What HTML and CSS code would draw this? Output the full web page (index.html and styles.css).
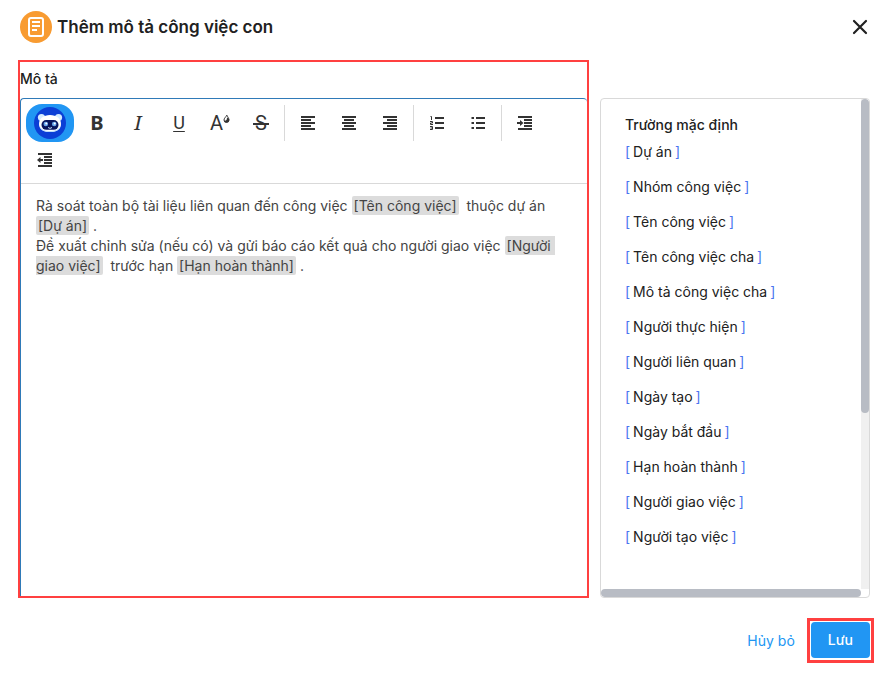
FILE: index.html
```html
<!DOCTYPE html>
<html lang="vi">
<head>
    <meta charset="UTF-8">
    <meta name="viewport" content="width=device-width, initial-scale=1.0">
    <title>Thêm mô tả công việc con</title>
    <link rel="stylesheet" href="styles.css">
</head>
<body>

    <header class="header">
        <svg class="header-icon" viewBox="0 0 32 32" aria-hidden="true">
            <circle cx="16" cy="16" r="16" fill="#f89b31"/>
            <rect x="9" y="7" width="14" height="18" rx="2" fill="none" stroke="#fff" stroke-width="2"/>
            <path d="M12 11h8M12 15h8M12 19h5" fill="none" stroke="#fff" stroke-width="1.8"/>
        </svg>
        <h1 class="title">Thêm mô tả công việc con</h1>
        <button class="close" type="button" aria-label="Đóng">
            <svg width="16" height="16" viewBox="0 0 16 16"><path d="M2 2l12 12M14 2L2 14" stroke="#212121" stroke-width="2.2" stroke-linecap="round"/></svg>
        </button>
    </header>

    <main class="content">
        <section class="description">
            <h2 class="label" id="descLabel">Mô tả</h2>
            <div class="editor">
                <div class="toolbar" role="toolbar">
                    <button class="assistant" type="button" aria-label="Trợ lý AI">
                        <svg width="32" height="32" viewBox="0 0 32 32">
                            <circle cx="16" cy="16" r="16" fill="#0b3fd6"/>
                            <circle cx="7.5" cy="10.500" r="3.6" fill="#d5ecff"/>
                            <circle cx="24.5" cy="10.500" r="3.6" fill="#d5ecff"/>
                            <path d="M16 8c-6.500 0-11 3.500-11 9S9.500 25 16 25s11-2.500 11-8S22.500 8 16 8z" fill="#fff"/>
                            <path d="M6 19.500c1.500 3.500 5.500 4.500 10 4.500s8.500-1 10-4.500c-.6 4-4.500 5.500-10 5.500s-9.400-1.500-10-5.500z" fill="#b9dcfa"/>
                            <rect x="7.500" y="13" width="17" height="9.800" rx="4.800" fill="#08145c"/>
                            <circle cx="11.800" cy="17" r="2.300" fill="#6ba8ee"/>
                            <circle cx="20.200" cy="17" r="2.300" fill="#6ba8ee"/>
                            <circle cx="12.300" cy="16.500" r="1" fill="#fff"/>
                            <circle cx="20.700" cy="16.500" r="1" fill="#fff"/>
                            <path d="M14 20.300c1 1.300 3 1.300 4 0" fill="none" stroke="#d5ecff" stroke-width="1"/>
                        </svg>
                    </button>
                    <button class="tool bold" type="button" aria-label="Đậm">B</button>
                    <button class="tool italic" type="button" aria-label="Nghiêng">I</button>
                    <button class="tool underline" type="button" aria-label="Gạch chân">U</button>
                    <button class="tool color" type="button" aria-label="Màu chữ">A<svg width="7" height="10" viewBox="0 0 7 10"><path d="M3.800 1.200C3 3 1 4.200 1 6a2.500 2.500 0 0 0 5 0C6 4.500 4.800 3 3.800 1.200z"/><path class="fill" d="M6 5a2.600 2.600 0 0 1-5 1.600C3 7 4 6 4 3.500z"/></svg></button>
                    <button class="tool strike" type="button" aria-label="Gạch ngang">&#8202;S&#8202;</button>
                    <span class="separator"></span>
                    <button class="tool" type="button" aria-label="Căn trái">
                        <svg width="16" height="16" viewBox="0 0 16 16"><path d="M1 2h14M1 5h10M1 8h14M1 11h10M1 14h14"/></svg>
                    </button>
                    <button class="tool" type="button" aria-label="Căn giữa">
                        <svg width="16" height="16" viewBox="0 0 16 16"><path d="M1 2h14M3 5h10M1 8h14M3 11h10M1 14h14"/></svg>
                    </button>
                    <button class="tool" type="button" aria-label="Căn phải">
                        <svg width="16" height="16" viewBox="0 0 16 16"><path d="M1 2h14M5 5h10M1 8h14M5 11h10M1 14h14"/></svg>
                    </button>
                    <span class="separator"></span>
                    <button class="tool" type="button" aria-label="Danh sách số">
                        <svg width="16" height="16" viewBox="0 0 16 16">
                            <path d="M6 3h9M6 8h9M6 13h9"/>
                            <path class="thin" d="M1.500 1.500h1V5M1 6.500h2.500V8H1.500v1.500h2.500M1 11.500h2.500v3H1M1.500 13h2"/>
                        </svg>
                    </button>
                    <button class="tool" type="button" aria-label="Danh sách">
                        <svg width="16" height="16" viewBox="0 0 16 16"><path d="M6 3h9M6 8h9M6 13h9M1.500 3h2.500M1.500 8h2.500M1.500 13h2.500"/></svg>
                    </button>
                    <span class="separator"></span>
                    <button class="tool" type="button" aria-label="Tăng thụt lề">
                        <svg width="16" height="16" viewBox="0 0 16 16"><path d="M1 2h14M7 5h8M7 8h8M7 11h8M1 14h14M0 8h4"/><path class="fill" d="M3 5l3.500 3L3 11z"/></svg>
                    </button>
                    <button class="tool" type="button" aria-label="Giảm thụt lề">
                        <svg width="16" height="16" viewBox="0 0 16 16"><path d="M1 2h14M7 5h8M7 8h8M7 11h8M1 14h14M2 8h4"/><path class="fill" d="M3.500 5L0 8l3.500 3z"/></svg>
                    </button>
                </div>
                <div class="text" contenteditable="true" role="textbox" aria-multiline="true" aria-labelledby="descLabel" spellcheck="false">
                    <p>Rà soát toàn bộ tài liệu liên quan đến công việc <span class="mention">[Tên công việc]</span>&nbsp; thuộc dự án <span class="mention">[Dự án]</span> .</p>
                    <p>Đề xuất chỉnh sửa (nếu có) và gửi báo cáo kết quả cho người giao việc <span class="mention">[Người giao việc]</span>&nbsp; trước hạn <span class="mention">[Hạn hoàn thành]</span> .</p>
                </div>
            </div>
        </section>

        <aside class="fields">
            <div class="fields-body">
                <h2 class="fields-title">Trường mặc định</h2>
                <ul class="field-list">
                    <li><button class="field" type="button">Dự án</button></li>
                    <li><button class="field" type="button">Nhóm công việc</button></li>
                    <li><button class="field" type="button">Tên công việc</button></li>
                    <li><button class="field" type="button">Tên công việc cha</button></li>
                    <li><button class="field" type="button">Mô tả công việc cha</button></li>
                    <li><button class="field" type="button">Người thực hiện</button></li>
                    <li><button class="field" type="button">Người liên quan</button></li>
                    <li><button class="field" type="button">Ngày tạo</button></li>
                    <li><button class="field" type="button">Ngày bắt đầu</button></li>
                    <li><button class="field" type="button">Hạn hoàn thành</button></li>
                    <li><button class="field" type="button">Người giao việc</button></li>
                    <li><button class="field" type="button">Người tạo việc</button></li>
                </ul>
            </div>
            <div class="scroll-y"><div class="thumb"></div></div>
            <div class="scroll-x"><div class="thumb"></div></div>
        </aside>
    </main>

    <footer class="footer">
        <button class="cancel" type="button">Hủy bỏ</button>
        <div class="save-frame">
            <button class="save" type="button">Lưu</button>
        </div>
    </footer>

</body>
</html>
```
FILE: styles.css
```css
* {
    margin: 0;
    padding: 0;
    box-sizing: border-box;
}
body {
    min-height: 100vh;
    display: flex;
    flex-direction: column;
    font-family: Inter, "Noto Sans", sans-serif;
    font-size: 14px;
    line-height: 20px;
    color: #212121;
    background: #fff;
}
button {
    border: none;
    background: none;
    font: inherit;
    color: inherit;
    cursor: pointer;
}
svg {
    display: block;
}

.header {
    display: flex;
    align-items: center;
    gap: 5px;
    padding: 11px 22px 17px 20px;
}
.header-icon {
    width: 32px;
    height: 32px;
}
.title {
    flex: 1;
    font-size: 17px;
    line-height: 24px;
    font-weight: 600;
}
.close {
    padding: 2px;
}

.content {
    flex: 1;
    display: flex;
    gap: 11px;
    padding: 0 22px 0 18px;
}
.description {
    flex: 1;
    display: flex;
    flex-direction: column;
    border: 2px solid #ff4040;
}
.label {
    padding: 7px 0 9px;
    font-size: 14px;
    font-weight: 500;
}
.editor {
    flex: 1;
    display: flex;
    flex-direction: column;
    border: 1px solid #2f7ab8;
    border-right: none;
    border-bottom: none;
    border-radius: 4px 4px 0 0;
}

.toolbar {
    display: flex;
    flex-wrap: wrap;
    align-items: center;
    column-gap: 3px;
    padding: 5px;
    border-bottom: 1px solid #d9d9d9;
}
.assistant {
    width: 48px;
    height: 38px;
    margin-right: 1px;
    display: flex;
    align-items: center;
    justify-content: center;
    border-radius: 16px;
    background: #2196f3;
}
.tool {
    width: 38px;
    height: 36px;
    display: flex;
    align-items: center;
    justify-content: center;
    font-size: 20px;
    color: #333;
}
.tool path {
    fill: none;
    stroke: #333;
    stroke-width: 2;
}
.tool .thin,
.color path {
    stroke-width: 1;
}
.tool .fill {
    fill: #333;
    stroke: none;
}
.bold {
    font-family: "Noto Sans", sans-serif;
    font-weight: 700;
}
.italic {
    font-family: "Noto Serif", "Liberation Serif", serif;
    font-style: italic;
}
.underline,
.strike,
.color {
    font-family: Roboto, sans-serif;
}
.underline {
    font-size: 18px;
    text-decoration: underline;
    text-underline-offset: 2px;
}
.strike {
    text-decoration: line-through;
}
.color svg {
    align-self: flex-start;
    margin-top: 9px;
}
.separator {
    width: 1px;
    height: 36px;
    margin: 0 1px;
    background: #d9d9d9;
}

.text {
    flex: 1;
    padding: 12px 15px;
    color: #444;
    outline: none;
}
.mention {
    padding: 1px 2px;
    border-radius: 2px;
    background: #dcdcdc;
    white-space: pre-wrap;
}

.fields {
    width: 270px;
    display: grid;
    grid-template-columns: 1fr 8px;
    grid-template-rows: 1fr 8px;
    border: 1px solid #d9d9d9;
    border-radius: 4px;
    margin-top: 38px;
    overflow: hidden;
}
.fields-body {
    padding: 16px 24px 24px;
}
.fields-title {
    font-size: 14px;
    font-weight: 500;
    margin-bottom: 7px;
}
.field-list {
    display: flex;
    flex-direction: column;
    gap: 15px;
    list-style: none;
}
.field {
    display: flex;
    gap: 3px;
}
.field::before,
.field::after {
    color: #4a74f0;
}
.field::before {
    content: "[";
}
.field::after {
    content: "]";
}
.scroll-y {
    background: #f0f0f0;
}
.scroll-y .thumb {
    height: 64%;
}
.thumb {
    height: 100%;
    border-radius: 4px;
    background: #b8bcc4;
}

.footer {
    display: flex;
    align-items: center;
    justify-content: flex-end;
    gap: 12px;
    padding: 20px 18px 17px;
}
.cancel {
    color: #2196f3;
}
.save-frame {
    padding: 1px 1px 2px;
    border: 3px solid #ff4040;
}
.save {
    display: block;
    padding: 8px 17px;
    border-radius: 4px;
    background: #2196f3;
    color: #fff;
    font-weight: 500;
}
```
